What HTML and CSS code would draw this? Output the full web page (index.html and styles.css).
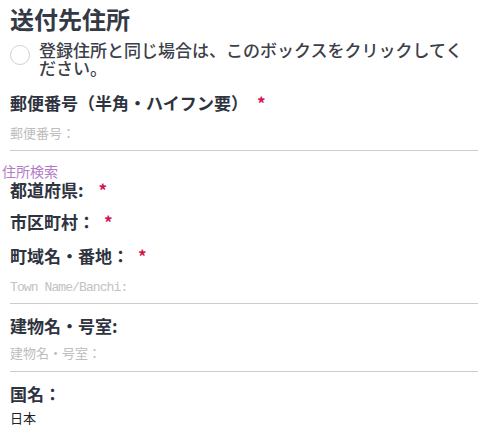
FILE: index.html
```html
<!DOCTYPE html>
<html lang="ja">
<head>
<meta charset="utf-8">
<link rel="stylesheet" href="styles.css">
</head>
<body>
<div class="form">
  <h2 class="title">送付先住所</h2>
  <label class="same">
    <span class="radio"></span>
    <span class="same-text">登録住所と同じ場合は、このボックスをクリックしてください。</span>
  </label>

  <div class="field f-zip">
    <div class="label">郵便番号（半角・ハイフン要）<span class="req">*</span></div>
    <div class="input">郵便番号：</div>
  </div>
  <div class="search">住所検索</div>

  <div class="label l-pref">都道府県:<span class="req wide">*</span></div>
  <div class="label l-city">市区町村：<span class="req">*</span></div>

  <div class="field f-town">
    <div class="label">町域名・番地：<span class="req">*</span></div>
    <div class="input mono">Town Name/Banchi:</div>
  </div>

  <div class="field f-bldg">
    <div class="label">建物名・号室:</div>
    <div class="input">建物名・号室：</div>
  </div>

  <div class="field f-country">
    <div class="label">国名：</div>
    <div class="value">日本</div>
  </div>
</div>
</body>
</html>
```
FILE: styles.css
```css
* { box-sizing: border-box; }
html, body { margin: 0; padding: 0; background: #fff; }
body {
  font-family: "Noto Sans CJK JP", "Noto Sans", sans-serif;
  color: #333842;
}
.form {
  padding: 3px 15px 0 10px;
  display: flex;
  flex-direction: column;
}
.title {
  margin: 0;
  font-size: 24px;
  font-weight: 700;
  line-height: 32px;
  color: #343a45;
}
.same {
  display: flex;
  align-items: flex-start;
  gap: 9px;
  margin-top: 6px;
}
.radio {
  flex: none;
  width: 20px;
  height: 20px;
  border: 1px solid #d2d2d2;
  border-radius: 50%;
  margin-top: 4px;
}
.same-text {
  font-size: 17px;
  line-height: 18px;
  font-weight: 500;
  color: #3b4049;
}
.field { display: flex; flex-direction: column; }
.label {
  font-size: 17px;
  font-weight: 700;
  line-height: 20px;
  color: #2e3340;
}
.req {
  color: #d0154f;
  margin-left: 9px;
  font-weight: 700;
}
.req.wide { margin-left: 15px; }
.input {
  font-size: 13px;
  line-height: 18px;
  color: #bdbdbd;
  border-bottom: 1px solid #cccccc;
}
.mono {
  font-family: "Liberation Mono", monospace;
  font-size: 13px;
  letter-spacing: -0.9px;
  color: #c2c2c2;
}
.value {
  margin-top: 5px;
  font-size: 13px;
  line-height: 18px;
  color: #222;
}

.f-zip { margin-top: 16px; }
.f-zip .input { margin-top: 11px; padding-bottom: 8px; }
.search {
  margin-left: -8px;
  margin-top: 12px;
  font-size: 14px;
  line-height: 17px;
  color: #b27ac8;
}
.l-pref { margin-top: 0; }
.l-city { margin-top: 12px; }
.f-town { margin-top: 14px; }
.f-town .input { margin-top: 13px; padding-bottom: 6px; }
.f-bldg { margin-top: 12px; }
.f-bldg .input { margin-top: 8px; padding-bottom: 9px; }
.f-country { margin-top: 12px; }
```
